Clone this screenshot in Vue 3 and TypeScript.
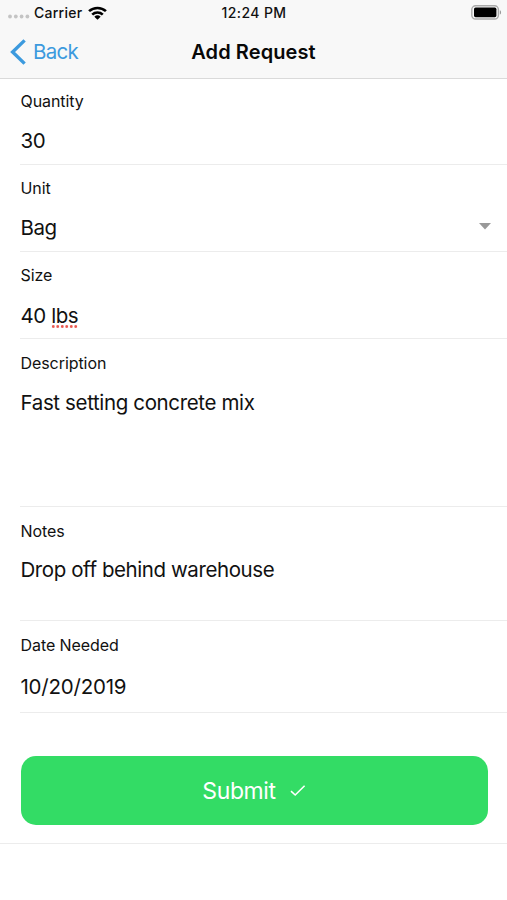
<script setup lang="ts">
import { ref } from 'vue'

interface Field {
  key: string
  label: string
  value: string
  misspelled?: string
  picker?: boolean
}

const fields = ref<Field[]>([
  { key: 'quantity', label: 'Quantity', value: '30' },
  { key: 'unit', label: 'Unit', value: 'Bag', picker: true },
  { key: 'size', label: 'Size', value: '40 ', misspelled: 'lbs' },
  { key: 'description', label: 'Description', value: 'Fast setting concrete mix' },
  { key: 'notes', label: 'Notes', value: 'Drop off behind warehouse' },
  { key: 'date', label: 'Date Needed', value: '10/20/2019' },
])
</script>

<template>
  <div class="screen">
    <header class="header">
      <div class="status">
        <div class="carrier">
          <svg class="signal" width="22" height="5" viewBox="0 0 22 5">
            <g fill="#c4c4c4">
              <circle cx="2" cy="2.5" r="1.9" /><circle cx="7.8" cy="2.5" r="1.9" />
              <circle cx="13.6" cy="2.5" r="1.9" /><circle cx="19.4" cy="2.5" r="1.9" />
            </g>
          </svg>
          <span class="carrier-name">Carrier</span>
          <svg class="wifi" width="19" height="14" viewBox="0 0 18 14" preserveAspectRatio="none">
            <g fill="none" stroke="#000" stroke-width="2.5">
              <path d="M1 5.2a11.6 11.6 0 0 1 16 0" />
              <path d="M4 8.6a7.3 7.3 0 0 1 10 0" />
            </g>
            <path d="M9 13.8 6 10.8a4.3 4.3 0 0 1 6 0Z" fill="#000" />
          </svg>
        </div>
        <span class="time">12:24 PM</span>
        <svg class="battery" width="31" height="15" viewBox="0 0 31 15">
          <rect x="0.8" y="0.8" width="26.6" height="13.2" rx="3.8" fill="#f8f8f8" stroke="#aaa" stroke-width="1.4" />
          <rect x="3" y="2.6" width="22.4" height="9.6" rx="1.6" fill="#000" />
          <path d="M28.8 5.2c1.7.6 1.7 3.8 0 4.4Z" fill="#999" />
        </svg>
      </div>
      <nav class="nav">
        <a class="back">
          <svg width="16" height="26" viewBox="0 0 16 26">
            <path d="M14.6 1.4 2.6 13 14.6 24.6" fill="none" stroke="#3c9ade" stroke-width="3.4" />
          </svg>
          <span class="back-text">Back</span>
        </a>
        <h1 class="title">Add Request</h1>
      </nav>
    </header>

    <main class="form">
      <section v-for="field in fields" :key="field.key" class="field" :class="field.key">
        <div class="label"><span>{{ field.label }}</span></div>
        <div class="value">
          <span class="text">{{ field.value }}<span v-if="field.misspelled" class="misspelled">{{ field.misspelled }}</span></span>
          <svg v-if="field.picker" class="caret" width="12" height="7" viewBox="0 0 12 7">
            <path d="M0 0h12L6 6.5Z" fill="#999" />
          </svg>
        </div>
      </section>
    </main>

    <footer class="footer">
      <button class="submit" type="button">
        <span class="submit-text">Submit</span>
        <svg width="16" height="12" viewBox="0 0 16 12">
          <path d="M1 6.1 5.2 10 14.6 0.8" fill="none" stroke="#fff" stroke-width="1.6" />
        </svg>
      </button>
    </footer>
  </div>
</template>

<style>
body {
  background: #fff;
}
</style>

<style scoped>
.screen {
  width: 100%;
  height: 900px;
  overflow: hidden;
  box-sizing: border-box;
  background: #fff;
  color: #111;
  font-family: Inter, "Liberation Sans", sans-serif;
}
.header {
  box-sizing: border-box;
  height: 79px;
  background: #f8f8f8;
  border-bottom: 1px solid #dadada;
}
.status {
  display: grid;
  grid-template-columns: 1fr auto 1fr;
  align-items: center;
  height: 25px;
  padding: 0 5px 0 8px;
}
.carrier {
  display: flex;
  align-items: center;
}
.signal {
  margin-top: 8px;
}
.carrier-name {
  margin-left: 4px;
  font-size: 14px;
  font-weight: 500;
  letter-spacing: 0.25px;
}
.wifi {
  margin-left: 6px;
}
.time {
  margin-right: 2px;
  font-size: 14px;
  font-weight: 500;
  letter-spacing: 0.4px;
}
.battery {
  justify-self: end;
}
.nav {
  display: grid;
  grid-template-columns: 1fr auto 1fr;
  align-items: center;
  height: 53px;
  padding: 0 10px;
}
.back {
  display: flex;
  align-items: center;
  gap: 7px;
  color: #3c9ade;
}
.back-text {
  font-size: 20.5px;
  letter-spacing: -0.7px;
}
.title {
  margin: 0;
  color: #080808;
  font-size: 20px;
  font-weight: 600;
  letter-spacing: 0.1px;
}
.field {
  box-sizing: border-box;
  height: 87px;
  margin-left: 20px;
  padding: 13px 0 0;
  border-bottom: 1px solid #ececec;
}
.quantity {
  height: 86px;
  padding-top: 12px;
}
.description {
  height: 168px;
  padding-top: 14px;
}
.notes {
  height: 114px;
  padding-top: 14px;
}
.date {
  height: 92px;
  padding-top: 14px;
}
.label {
  height: 20px;
  padding-left: 0.5px;
  font-size: 16px;
  letter-spacing: -0.07px;
  line-height: 20px;
}
.value {
  display: flex;
  align-items: center;
  justify-content: space-between;
  height: 26px;
  margin-top: 17px;
  padding: 0 16px 0 0.5px;
  font-size: 20.5px;
  letter-spacing: -0.42px;
  line-height: 26px;
}
.size .value {
  margin-top: 18px;
}
.description .value {
  letter-spacing: -0.36px;
}
.notes .value {
  margin-top: 16px;
}
.date .value {
  margin-top: 19px;
  letter-spacing: -0.22px;
}
.text {
  white-space: pre;
}
.misspelled {
  background: radial-gradient(circle, #e9574f 1.1px, transparent 1.7px) 0 100% / 4.5px 3px repeat-x;
}
.caret {
  margin-top: -4px;
}
.footer {
  box-sizing: border-box;
  height: 131px;
  padding: 43px 19.5px 0 20.5px;
  border-bottom: 1px solid #ececec;
}
.submit {
  display: flex;
  align-items: center;
  justify-content: center;
  gap: 14px;
  width: 100%;
  height: 69px;
  padding: 0;
  border: 0;
  border-radius: 15px;
  background: #33dc65;
  color: #fff;
  font-family: inherit;
}
.submit-text {
  font-size: 23px;
  font-weight: 400;
  letter-spacing: -0.4px;
}
</style>
